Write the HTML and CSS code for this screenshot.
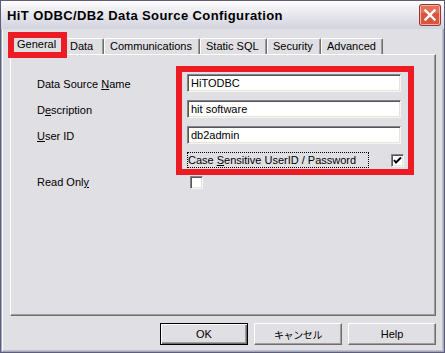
FILE: index.html
```html
<!DOCTYPE html>
<html>
<head>
<meta charset="utf-8">
<link rel="stylesheet" href="styles.css">
</head>
<body>
<div class="window">
  <div class="titlebar">
    <div class="title">HiT ODBC/DB2 Data Source Configuration</div>
    <svg class="close-icon" width="22" height="22" viewBox="0 0 22 22">
      <rect x="0" y="0" width="22" height="22" rx="3" fill="#9e3529"/>
      <rect x="1" y="1" width="20" height="20" rx="2" fill="#f0b4a8"/>
      <rect x="2" y="2" width="18" height="18" rx="1" fill="#d9533d"/>
      <rect x="2" y="2" width="18" height="7" rx="1" fill="#e2715c"/>
      <path d="M6.5 6.5 L15.5 15.5 M15.5 6.5 L6.5 15.5" stroke="#ffffff" stroke-width="2.4" stroke-linecap="square"/>
    </svg>
  </div>
  <div class="client">
    <div class="tabs">
      <div class="tab active t-general">General</div>
      <div class="tab t-data">Data</div>
      <div class="tab t-comm">Communications</div>
      <div class="tab t-sql">Static SQL</div>
      <div class="tab t-sec">Security</div>
      <div class="tab t-adv">Advanced</div>
    </div>
    <div class="panel">
      <div class="form">
        <div class="label">Data Source <u>N</u>ame</div>
        <input class="field" type="text" value="HiTODBC" readonly>
        <div class="label">D<u>e</u>scription</div>
        <input class="field" type="text" value="hit software" readonly>
        <div class="label"><u>U</u>ser ID</div>
        <input class="field" type="text" value="db2admin" readonly>
        <div class="label"></div>
        <div class="checkrow">
          <span class="focus">Case <u>S</u>ensitive UserID / Password</span>
          <span class="check on"><svg width="9" height="9" viewBox="0 0 9 9"><path d="M1 4 L3 6.5 L8 1.5" stroke="#000" stroke-width="2" fill="none"/></svg></span>
        </div>
        <div class="label">Read Onl<u>y</u></div>
        <div class="checkrow"><span class="check ro"></span></div>
      </div>
    </div>
    <div class="buttons">
      <div class="btn default"><span>OK</span></div>
      <div class="btn jp"><span>キャンセル</span></div>
      <div class="btn"><span>Help</span></div>
    </div>
  </div>
  <div class="mark mark-tab"></div>
  <div class="mark mark-fields"></div>
</div>
</body>
</html>
```

FILE: styles.css
```css
* { box-sizing: border-box; }
html, body { margin: 0; padding: 0; }
body {
  width: 445px;
  height: 353px;
  overflow: hidden;
  font-family: "Liberation Sans", Arial, sans-serif;
  font-size: 11px;
  color: #000;
  background: #e0dfe3;
}
.window {
  position: relative;
  width: 445px;
  height: 353px;
  background: #e0dfe3;
  border: 1px solid #5d5d7c;
  box-shadow: inset 1px 0 0 #a5a5bd, inset -1px 0 0 #a5a5bd, inset 0 -1px 0 #a5a5bd, inset 2px 0 0 #fdfdfe, inset -2px 0 0 #c0c0cc, inset 0 -2px 0 #c0c0cc;
  display: flex;
  flex-direction: column;
}
.titlebar {
  height: 28px;
  flex: none;
  display: flex;
  align-items: center;
  justify-content: space-between;
  padding: 0 3px 0 6px;
  background: linear-gradient(#ffffff 0%, #f1f1f5 25%, #e2e2ea 60%, #d3d3de 100%);
}
.title {
  font-weight: bold;
  font-size: 13px;
  letter-spacing: 0.4px;
  color: #000;
  padding-top: 1px;
}
.close-icon {
  flex: none;
  display: block;
}
.client {
  flex: 1;
  display: flex;
  flex-direction: column;
  padding: 6px 9px 0 9px;
}
.tabs {
  height: 19px;
  display: flex;
  align-items: flex-end;
  position: relative;
  z-index: 1;
}
.tab {
  height: 16px;
  padding: 1px 0 0 5px;
  border-top: 1px solid #ffffff;
  border-left: 1px solid #ffffff;
  border-right: 1px solid #716f64;
  box-shadow: inset -1px 0 0 #9d9da1;
  border-top-left-radius: 2px;
  border-top-right-radius: 2px;
  background: #e0dfe3;
  white-space: nowrap;
  line-height: 13px;
}
.tab.active {
  height: 20px;
  padding: 2px 0 0 6px;
  margin-right: -3px;
  margin-bottom: -1px;
  position: relative;
  z-index: 2;
}
.t-general { width: 57px; }
.t-data { width: 40px; }
.t-comm { width: 96px; }
.t-sql { width: 67px; }
.t-sec { width: 54px; }
.t-adv { width: 62px; }
.panel {
  height: 262px;
  width: 426px;
  border-top: 1px solid #ffffff;
  border-left: 1px solid #ffffff;
  border-right: 1px solid #716f64;
  border-bottom: 1px solid #716f64;
  box-shadow: inset -1px -1px 0 #9d9da1;
  padding: 19px 0 0 26px;
}
.form {
  display: grid;
  grid-template-columns: 150px 217px;
  grid-template-rows: 18px 18px 18px 16px 13px;
  row-gap: 8px;
}
.label {
  padding-top: 4px;
  line-height: 13px;
  white-space: nowrap;
}
.label:nth-last-child(2) { padding-top: 0; }
.field {
  width: 214px;
  height: 18px;
  margin: 0;
  padding: 0 0 0 3px;
  font-family: "Liberation Sans", Arial, sans-serif;
  font-size: 11px;
  color: #000;
  background: #ffffff;
  border: 1px solid;
  border-color: #84838a #f5f4ee #f5f4ee #84838a;
  box-shadow: inset 1px 1px 0 #56555c, inset -1px -1px 0 #e8e6dc;
  outline: none;
}
.checkrow {
  display: flex;
  align-items: center;
  justify-content: space-between;
}
.focus {
  height: 16px;
  line-height: 14px;
  border: 1px dotted #000;
  white-space: nowrap;
  width: 182px;
}
.check {
  width: 13px;
  height: 13px;
  background: #ffffff;
  border: 1px solid;
  border-color: #84838a #f5f4ee #f5f4ee #84838a;
  box-shadow: inset 1px 1px 0 #56555c, inset -1px -1px 0 #e8e6dc;
  display: flex;
  align-items: center;
  justify-content: center;
}
.check.ro { margin-left: 3px; }
.buttons {
  display: flex;
  justify-content: flex-end;
  gap: 6px;
  margin-top: 7px;
  margin-right: -1px;
}
.btn {
  width: 88px;
  height: 22px;
  background: #e0dfe3;
  border: 1px solid;
  border-color: #ffffff #716f64 #716f64 #ffffff;
  box-shadow: inset -1px -1px 0 #9d9da1;
  display: flex;
  align-items: center;
  justify-content: center;
  font-size: 11px;
}
.btn.default {
  border: 1px solid #000;
  box-shadow: inset 1px 1px 0 #ffffff, inset -1px -1px 0 #716f64, inset -2px -2px 0 #9d9da1;
}
.btn.jp span {
  font-family: "Noto Sans CJK JP", sans-serif;
  font-size: 10px;
  letter-spacing: -0.4px;
}
.mark {
  position: absolute;
  border: 6px solid #ed1c24;
  z-index: 5;
}
.mark-tab {
  left: 7px;
  top: 31px;
  width: 59px;
  height: 26px;
}
.mark-fields {
  left: 175px;
  top: 65px;
  width: 238px;
  height: 109px;
}
```
